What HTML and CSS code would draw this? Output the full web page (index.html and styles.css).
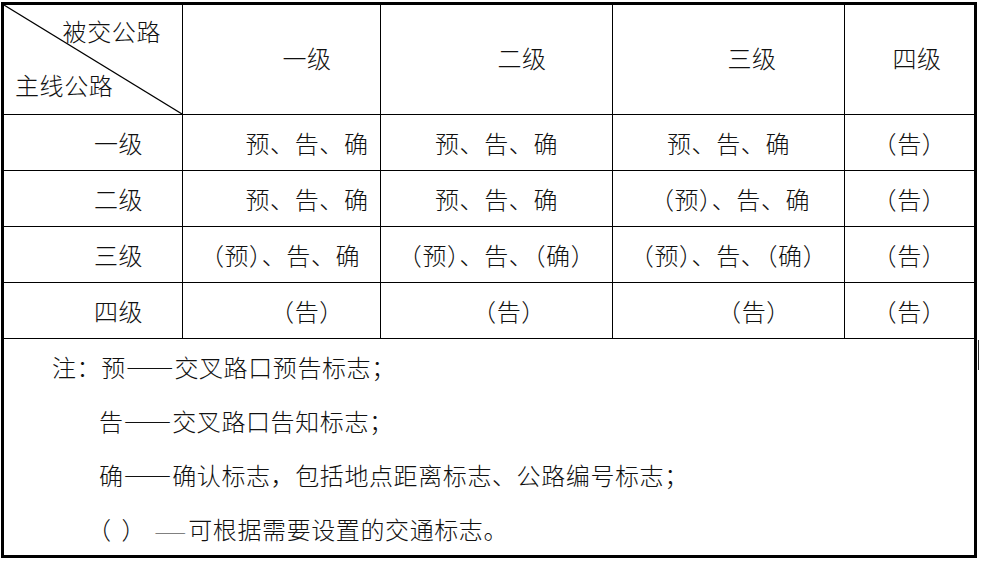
FILE: index.html
```html
<!DOCTYPE html>
<html lang="zh-CN">
<head>
<meta charset="utf-8">
<title>交叉路口标志设置</title>
<link rel="stylesheet" href="styles.css">
</head>
<body>
<div class="sheet">
  <div class="grid">
    <div class="cell corner">
      <svg class="diag" viewBox="0 0 100 100" preserveAspectRatio="none" aria-hidden="true"><line x1="0" y1="0" x2="100" y2="100"/></svg>
      <span class="corner-top">被交公路</span>
      <span class="corner-bottom">主线公路</span>
    </div>
    <div class="cell head in-l">一级</div>
    <div class="cell head in-l">二级</div>
    <div class="cell head in-m">三级</div>
    <div class="cell head last in-s">四级</div>

    <div class="cell in-l">一级</div>
    <div class="cell in-l">预、告、确</div>
    <div class="cell">预、告、确</div>
    <div class="cell">预、告、确</div>
    <div class="cell last"><span class="p">（</span>告<span class="p">）</span></div>

    <div class="cell in-l">二级</div>
    <div class="cell in-l">预、告、确</div>
    <div class="cell">预、告、确</div>
    <div class="cell in-s"><span class="p">（</span>预<span class="p">）</span>、告、确</div>
    <div class="cell last"><span class="p">（</span>告<span class="p">）</span></div>

    <div class="cell in-l">三级</div>
    <div class="cell in-xs"><span class="p">（</span>预<span class="p">）</span>、告、确</div>
    <div class="cell"><span class="p">（</span>预<span class="p">）</span>、告、<span class="p">（</span>确<span class="p">）</span></div>
    <div class="cell"><span class="p">（</span>预<span class="p">）</span>、告、<span class="p">（</span>确<span class="p">）</span></div>
    <div class="cell last"><span class="p">（</span>告<span class="p">）</span></div>

    <div class="cell in-l">四级</div>
    <div class="cell in-l"><span class="p">（</span>告<span class="p">）</span></div>
    <div class="cell in-h"><span class="p">（</span>告<span class="p">）</span></div>
    <div class="cell in-l"><span class="p">（</span>告<span class="p">）</span></div>
    <div class="cell last"><span class="p">（</span>告<span class="p">）</span></div>

    <div class="notes">
      <p class="note-line lead">注：预——交叉路口预告标志；</p>
      <p class="note-line">告——交叉路口告知标志；</p>
      <p class="note-line">确——确认标志，包括地点距离标志、公路编号标志；</p>
      <p class="note-line"><span class="p open">（</span><span class="p">）</span><span class="dash-short">——</span>可根据需要设置的交通标志。</p>
    </div>
  </div>
  <span class="edge-mark" aria-hidden="true"></span>
</div>
</body>
</html>
```
FILE: styles.css
```css
* {
  box-sizing: border-box;
}

html,
body {
  margin: 0;
  background: #fff;
}

body {
  font-family: "Noto Sans CJK SC", "Liberation Serif", serif;
  font-size: 24px;
  font-weight: 300;
  color: #111;
  letter-spacing: 0.6px;
  text-spacing-trim: space-all;
}

.sheet {
  position: relative;
  padding: 2px 0 0 1px;
}

.grid {
  display: grid;
  width: 976px;
  grid-template-columns: 179px 198px 232px 232px 129px;
  grid-template-rows: 110px 56px 56px 56px 56px 216px;
  border: 3px solid #000;
}

.cell {
  display: flex;
  align-items: center;
  justify-content: center;
  white-space: nowrap;
  line-height: 1;
  border-right: 1px solid #000;
  border-bottom: 1px solid #000;
}

.cell.head {
  padding-bottom: 3px;
}

.cell.last {
  border-right: 0;
}

.in-l { padding-left: 51px; }
.in-m { padding-left: 47px; }
.in-h { padding-left: 25px; }
.in-s { padding-left: 15px; }
.in-xs { padding-left: 9px; }

.p {
  font-feature-settings: "halt";
}

.corner {
  position: relative;
  display: flex;
  flex-direction: column;
  align-items: stretch;
  justify-content: flex-start;
}

.diag {
  position: absolute;
  inset: 0;
  width: 100%;
  height: 100%;
}

.diag line {
  stroke: #000;
  stroke-width: 1.2;
  vector-effect: non-scaling-stroke;
}

.corner-top,
.corner-bottom {
  display: block;
  line-height: 54px;
}

.corner-top {
  margin-top: -1px;
  text-align: right;
  padding-right: 21px;
}

.corner-bottom {
  text-align: left;
  padding-left: 11px;
}

.notes {
  grid-column: 1 / -1;
  padding: 1px 0 0 48px;
  line-height: 54px;
  white-space: nowrap;
}

.note-line {
  margin: 0;
  padding-left: 47px;
}

.note-line.lead {
  padding-left: 0;
}

.open {
  display: inline-block;
  margin-right: 10px;
}

.dash-short {
  font-size: 16px;
  letter-spacing: 0;
  margin-left: 20px;
  margin-right: 2px;
}

.edge-mark {
  position: absolute;
  left: 978px;
  top: 340px;
  width: 1px;
  height: 30px;
  background: #333;
}
```
